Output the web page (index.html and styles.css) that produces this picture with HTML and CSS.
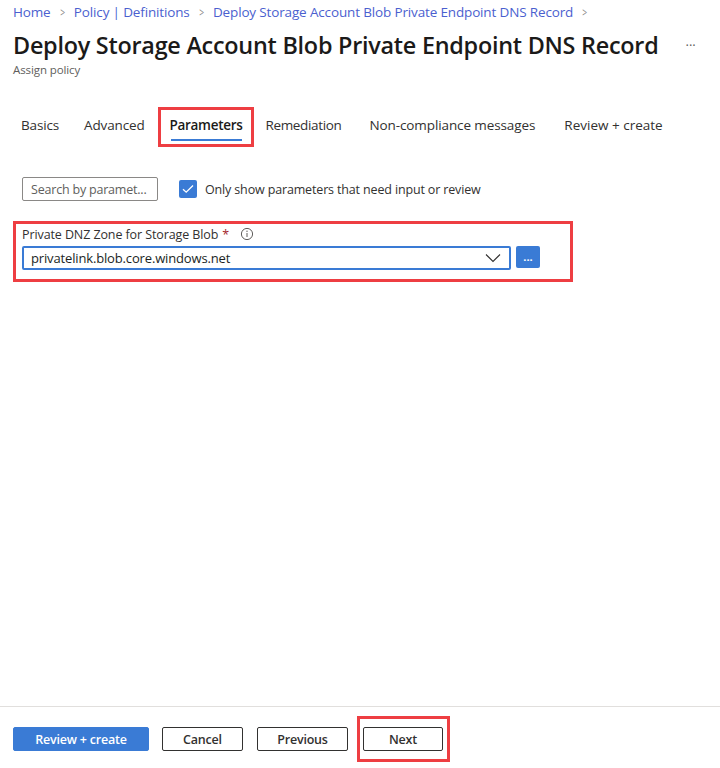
FILE: index.html
```html
<!DOCTYPE html>
<html lang="en">
<head>
<meta charset="utf-8">
<title>Deploy Storage Account Blob Private Endpoint DNS Record</title>
<link rel="stylesheet" href="styles.css">
</head>
<body>
<div class="page">
  <div class="main">
    <nav class="crumbs">
      <a class="crumb">Home</a><span class="sep">&gt;</span>
      <a class="crumb">Policy | Definitions</a><span class="sep">&gt;</span>
      <a class="crumb">Deploy Storage Account Blob Private Endpoint DNS Record</a><span class="sep">&gt;</span>
    </nav>
    <div class="title-row">
      <h1 class="title">Deploy Storage Account Blob Private Endpoint DNS Record</h1>
      <span class="more">···</span>
    </div>
    <div class="subtitle">Assign policy</div>

    <div class="tabs">
      <div class="tab">Basics</div>
      <div class="tab">Advanced</div>
      <div class="tab active">Parameters</div>
      <div class="tab">Remediation</div>
      <div class="tab">Non-compliance messages</div>
      <div class="tab">Review + create</div>
    </div>

    <div class="filters">
      <div class="search">Search by paramet...</div>
      <label class="check">
        <span class="box"><svg width="12" height="10" viewBox="0 0 12 10"><path d="M1 5.2 L4.2 8.2 L11 1.5" fill="none" stroke="#fff" stroke-width="1.3"/></svg></span>
        <span>Only show parameters that need input or review</span>
      </label>
    </div>

    <div class="param">
      <div class="label">Private DNZ Zone for Storage Blob <span class="req">*</span>
        <svg class="info" width="14" height="14" viewBox="0 0 14 14"><circle cx="7" cy="7" r="5.6" fill="none" stroke="#605e5c" stroke-width="1"/><path d="M7 6 V10" stroke="#605e5c" stroke-width="1"/><circle cx="7" cy="4.3" r="0.7" fill="#605e5c"/></svg>
      </div>
      <div class="field-row">
        <div class="select">
          <span>privatelink.blob.core.windows.net</span>
          <svg width="16" height="10" viewBox="0 0 16 10"><path d="M1 1.5 L8 8.5 L15 1.5" fill="none" stroke="#323130" stroke-width="1.1"/></svg>
        </div>
        <div class="ellipsis">...</div>
      </div>
    </div>
  </div>

  <div class="footer">
    <button class="btn primary">Review + create</button>
    <button class="btn">Cancel</button>
    <button class="btn wide">Previous</button>
    <button class="btn marked">Next</button>
  </div>
</div>
</body>
</html>
```

FILE: styles.css
```css
html, body {
  margin: 0;
  padding: 0;
  background: #fff;
}
body {
  font-family: "Open Sans", "Noto Sans", sans-serif;
  color: #323130;
}
.page {
  height: 768px;
  display: flex;
  flex-direction: column;
}
.main {
  padding: 2px 0 0 13px;
}
.crumbs {
  display: flex;
  align-items: center;
  height: 20px;
  font-size: 13.5px;
  color: #4f5fd0;
  letter-spacing: -0.15px;
}
.crumb { color: #4b5fcf; }
.sep {
  color: #8a8886;
  margin: 0 8px;
  font-size: 13px;
  transform: scaleX(0.65);
}
.title-row {
  display: flex;
  align-items: center;
  margin-top: 7px;
  height: 32px;
}
.title {
  margin: 0;
  font-size: 23.4px;
  font-weight: 600;
  color: #1b1a19;
  letter-spacing: -0.25px;
  white-space: nowrap;
}
.more {
  margin-left: 27px;
  color: #605e5c;
  font-size: 13px;
}
.subtitle {
  margin-top: 1px;
  font-size: 11.5px;
  color: #605e5c;
  line-height: 16px;
  letter-spacing: -0.1px;
}
.tabs {
  display: flex;
  margin-top: 29px;
  margin-left: -4px;
}
.tab {
  position: relative;
  height: 40px;
  padding: 0 12px 4px;
  box-sizing: border-box;
  display: flex;
  align-items: center;
  font-size: 13.5px;
  color: #323130;
  letter-spacing: -0.15px;
}
.tab + .tab { margin-left: 1px; }
.tab:nth-child(3) { letter-spacing: -0.3px; }
.tab:nth-child(4) { margin-left: -1px; letter-spacing: -0.35px; }
.tab:nth-child(5) { margin-left: 4px; letter-spacing: -0.1px; }
.tab:nth-child(6) { margin-left: 5px; letter-spacing: 0px; }
.tab.active {
  font-weight: 600;
  color: #1b1a19;
  outline: 3px solid #ee3e42;
  outline-offset: -3px;
}
.tab.active::after {
  content: "";
  position: absolute;
  left: 13px;
  right: 12px;
  bottom: 6px;
  height: 2px;
  background: #3a7bd5;
}
.filters {
  display: flex;
  align-items: center;
  margin-top: 30px;
  padding-left: 9px;
  gap: 21px;
}
.search {
  width: 126px;
  height: 22px;
  border: 1px solid #8a8886;
  border-radius: 2px;
  font-size: 12.5px;
  color: #605e5c;
  padding-left: 8px;
  display: flex;
  align-items: center;
  letter-spacing: -0.2px;
}
.check {
  display: flex;
  align-items: center;
  gap: 8px;
  font-size: 12.5px;
  color: #323130;
  letter-spacing: -0.15px;
}
.box {
  width: 18px;
  height: 18px;
  background: #3a7bd5;
  border-radius: 2px;
  display: flex;
  align-items: center;
  justify-content: center;
}
.param {
  width: 551px;
  margin-top: 20px;
  padding: 5px 0 12px 9px;
  outline: 3px solid #ee3e42;
  outline-offset: -3px;
  box-sizing: content-box;
}
.label {
  display: flex;
  align-items: center;
  height: 16px;
  font-size: 12.5px;
  color: #323130;
  letter-spacing: -0.1px;
}
.req {
  color: #a4262c;
  margin-left: 4px;
}
.info { margin-left: 11px; }
.field-row {
  display: flex;
  margin-top: 4px;
  gap: 5px;
}
.select {
  width: 470px;
  height: 20px;
  border: 2px solid #3a7bd5;
  border-radius: 2px;
  display: flex;
  align-items: center;
  justify-content: space-between;
  padding: 0 8px 0 7px;
  font-size: 13px;
  color: #201f1e;
  letter-spacing: -0.15px;
}
.ellipsis {
  width: 24px;
  height: 22px;
  background: #3a7bd5;
  border-radius: 2px;
  color: #fff;
  font-size: 11px;
  font-weight: 700;
  display: flex;
  align-items: center;
  justify-content: center;
  line-height: 1;
  padding-bottom: 2px;
  box-sizing: border-box;
}
.footer {
  margin-top: auto;
  border-top: 1px solid #e1dfdd;
  height: 62px;
  box-sizing: border-box;
  padding: 20px 0 0 13px;
  display: flex;
  align-items: flex-start;
  gap: 13px;
}
.btn {
  position: relative;
  height: 24px;
  padding: 0;
  border: 1px solid #323130;
  border-radius: 2px;
  background: #fff;
  color: #323130;
  font-family: inherit;
  font-size: 12.5px;
  font-weight: 600;
  width: 81px;
  letter-spacing: -0.2px;
}
.btn.primary {
  width: 136px;
  background: #3a7bd5;
  border-color: #3a7bd5;
  color: #fff;
}
.btn.wide { width: 91px; margin-left: 1px; }
.btn.marked { width: 80px; margin-left: 2px; }
.btn.marked::after {
  content: "";
  position: absolute;
  left: -7px;
  right: -8px;
  top: -12px;
  bottom: -12px;
  border: 3px solid #ee3e42;
}
```
